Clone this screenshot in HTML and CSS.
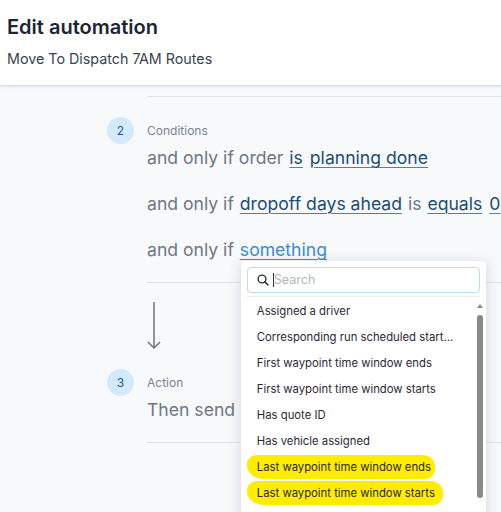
FILE: index.html
```html
<!DOCTYPE html>
<html lang="en">
<head>
<meta charset="utf-8">
<title>Edit automation</title>
<link rel="stylesheet" href="styles.css">
</head>
<body>
<header class="hdr">
  <h1 class="hdr-title">Edit automation</h1>
  <p class="hdr-sub">Move To Dispatch 7AM Routes</p>
</header>
<main class="flow">
  <div class="rule rule-top"></div>
  <section class="step">
    <div class="badge">2</div>
    <div class="step-label">Conditions</div>
    <div class="conds">
      <div class="cond">and only if order <a class="tok">is</a> <a class="tok">planning done</a></div>
      <div class="cond">and only if <a class="tok">dropoff days ahead</a> is <a class="tok">equals</a> <a class="tok">0</a></div>
      <div class="cond">and only if <span class="picker"><a class="tok tok-active">something</a>
        <div class="dropdown">
          <div class="search">
            <svg class="search-ico" width="12" height="12" viewBox="0 0 12 12" aria-hidden="true"><circle cx="5" cy="5" r="3.9" fill="none" stroke="#2b2f36" stroke-width="1.4"/><path d="M7.9 7.9 L11 11" stroke="#2b2f36" stroke-width="1.5" stroke-linecap="round"/></svg>
            <span class="caret"></span>
            <span class="placeholder">Search</span>
          </div>
          <div class="sep"></div>
          <ul class="opts">
            <li>Assigned a driver</li>
            <li class="trunc">Corresponding run scheduled start time</li>
            <li>First waypoint time window ends</li>
            <li>First waypoint time window starts</li>
            <li>Has quote ID</li>
            <li>Has vehicle assigned</li>
            <li><span class="hl hl-a">Last waypoint time window ends</span></li>
            <li><span class="hl hl-b">Last waypoint time window starts</span></li>
            <li>Order type</li>
          </ul>
          <div class="sbar"><span class="sbar-up"></span><span class="sbar-thumb"></span></div>
        </div>
      </span></div>
    </div>
  </section>
  <div class="rule rule-mid"></div>
  <svg class="arrow" width="14" height="48" viewBox="0 0 14 48" aria-hidden="true"><path d="M7 0 V46 M1 40 L7 46 L13 40" fill="none" stroke="#6b7482" stroke-width="1.5"/></svg>
  <section class="step step-action">
    <div class="badge">3</div>
    <div class="step-label">Action</div>
    <div class="conds">
      <div class="cond">Then send <a class="tok">notification</a></div>
    </div>
  </section>
  <div class="rule rule-end"></div>
</main>
</body>
</html>
```
FILE: styles.css
```css
html, body {
  margin: 0;
  padding: 0;
  overflow: hidden;
  height: 100%;
}
body {
  background: #f8f9fb;
  font-family: "Inter", "Noto Sans", sans-serif;
  color: #6b7280;
}
.hdr {
  background: #fff;
  height: 86px;
  box-sizing: border-box;
  padding: 15px 7px 0;
  border-bottom: 1px solid #d9e0e5;
  box-shadow: 0 1px 2px rgba(120, 140, 160, 0.18);
}
.hdr-title {
  margin: 0;
  font-size: 20px;
  line-height: 24px;
  font-weight: 600;
  color: #1d2533;
}
.hdr-sub {
  margin: 11px 0 0;
  font-size: 14.3px;
  line-height: 18px;
  color: #3a4250;
}
.flow {
  padding: 10px 0 0 107px;
}
.rule {
  margin-left: 40px;
  height: 1px;
  background: #dde3ea;
}
.step {
  display: grid;
  grid-template-columns: 27px 1fr;
  column-gap: 13px;
  margin-top: 20px;
}
.badge {
  grid-row: 1;
  grid-column: 1;
  width: 27px;
  height: 27px;
  border-radius: 50%;
  background: #d3e9fc;
  color: #2c5a85;
  font-size: 12px;
  display: flex;
  align-items: center;
  justify-content: center;
}
.step-label {
  grid-row: 1;
  grid-column: 2;
  align-self: center;
  font-size: 12px;
  color: #7b8493;
}
.conds {
  grid-column: 2;
  display: flex;
  flex-direction: column;
  gap: 22px;
  padding-top: 2px;
}
.cond {
  font-size: 17.6px;
  line-height: 24px;
  white-space: nowrap;
  color: #6e7686;
}
.tok {
  color: #1b4b77;
  text-decoration: underline;
  text-decoration-color: #5a7ea3;
  text-decoration-thickness: 1px;
  text-underline-offset: 3px;
  margin: 0 1px;
}
.tok-active {
  color: #3a8dd0;
  text-decoration-color: #3a8dd0;
}
.picker {
  position: relative;
  display: inline-block;
}
.dropdown {
  position: absolute;
  top: calc(100% - 1px);
  left: 2px;
  width: 245px;
  height: 270px;
  background: #fff;
  border-radius: 4px;
  box-shadow: 0 2px 14px rgba(40, 50, 70, 0.18);
  padding: 6px 6px 0;
  box-sizing: border-box;
  white-space: normal;
}
.search {
  height: 26px;
  box-sizing: border-box;
  border: 1px solid #b9dbf7;
  border-radius: 4px;
  display: flex;
  align-items: center;
  padding-left: 9px;
}
.search-ico {
  flex: none;
}
.caret {
  width: 1px;
  height: 14px;
  background: #333;
  margin-left: 4px;
}
.placeholder {
  font-size: 12.5px;
  color: #b2b7be;
}
.sep {
  height: 1px;
  background: #eceef1;
  margin-top: 3px;
}
.opts {
  list-style: none;
  margin: 0;
  padding: 1px 24px 0 10px;
}
.opts li {
  height: 26px;
  line-height: 26px;
  font-size: 11.3px;
  color: #2c2836;
  white-space: nowrap;
}
.opts .trunc {
  overflow: hidden;
  text-overflow: ellipsis;
}
.hl {
  background: #ffec00;
  margin-left: -10px;
  padding: 5px 4px 5px 10px;
  border-radius: 10px 12px 9px 16px / 9px 12px 10px 14px;
}
.hl-b {
  padding-right: 8px;
}
.sbar {
  position: absolute;
  right: 3px;
  top: 43px;
  width: 6px;
}
.sbar-up {
  display: block;
  margin: 0 auto;
  width: 0;
  height: 0;
  border-left: 3px solid transparent;
  border-right: 3px solid transparent;
  border-bottom: 4px solid #8a8a8a;
}
.sbar-thumb {
  display: block;
  margin-top: 7px;
  height: 183px;
  border-radius: 3px;
  background: #8a8a8a;
}
.rule-mid {
  margin-top: 19.5px;
}
.arrow {
  display: block;
  margin: 19px 0 0 40px;
}
.step-action {
  margin-top: 19px;
}
.rule-end {
  margin-top: 20px;
}
```
